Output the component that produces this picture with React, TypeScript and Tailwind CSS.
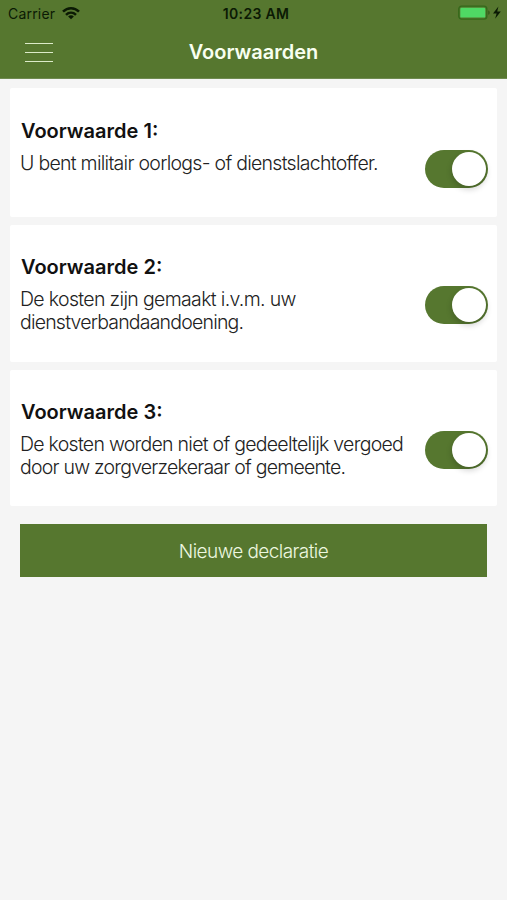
import React, { useState } from "react";

interface Voorwaarde {
  id: number;
  regels: { tekst: string; className: string }[];
  cardClass: string;
  textClass: string;
  toggleClass: string;
}

const voorwaarden: Voorwaarde[] = [
  {
    id: 1,
    regels: [
      { tekst: "U bent militair oorlogs- of dienstslachtoffer.", className: "tracking-[-0.72px]" },
    ],
    cardClass: "h-[129px]",
    textClass: "pt-[29px]",
    toggleClass: "pt-[62px]",
  },
  {
    id: 2,
    regels: [
      { tekst: "De kosten zijn gemaakt i.v.m. uw", className: "tracking-[-0.66px]" },
      { tekst: "dienstverbandaandoening.", className: "tracking-[-0.8px]" },
    ],
    cardClass: "h-[137px]",
    textClass: "pt-[28px]",
    toggleClass: "pt-[61px]",
  },
  {
    id: 3,
    regels: [
      { tekst: "De kosten worden niet of gedeeltelijk vergoed", className: "tracking-[-0.73px]" },
      { tekst: "door uw zorgverzekeraar of gemeente.", className: "tracking-[-0.78px]" },
    ],
    cardClass: "h-[136px]",
    textClass: "pt-[28px]",
    toggleClass: "pt-[61px]",
  },
];

const WifiIcon = () => (
  <svg width="18" height="13" viewBox="0 0 18 13" fill="none" stroke="#0b1a04" strokeWidth="2.5">
    <path d="M1 4.7C5.6 0.1 12.4 0.1 17 4.7" />
    <path d="M4 7.8C6.9 5 11.1 5 14 7.8" />
    <path d="M9 12.2L6.1 9.4C7.8 8 10.2 8 11.9 9.4Z" fill="#0b1a04" stroke="none" />
  </svg>
);

const BatteryIcon = () => (
  <svg width="45" height="16" viewBox="0 0 45 16">
    <rect x="0.8" y="1.1" width="28" height="13" rx="2.8" fill="none" stroke="#34691a" strokeWidth="1.4" />
    <rect x="2.3" y="2.8" width="25" height="9.8" rx="1.2" fill="#4fd964" />
    <path d="M30.2 5.5C32.3 6 32.3 9.2 30.2 9.7Z" fill="#34591a" />
    <path d="M40.4 1.6L35 8.4H38.6L37.1 13.7L42.8 6.4H39.2Z" fill="#0b1a04" />
  </svg>
);

const Toggle = ({ checked, onChange }: { checked: boolean; onChange: () => void }) => (
  <button
    role="switch"
    aria-checked={checked}
    onClick={onChange}
    className={`flex h-[38px] w-[63px] shrink-0 items-center rounded-full px-[2px] ${
      checked ? "justify-end bg-[#56772f]" : "justify-start bg-gray-300"
    }`}
  >
    <span className="size-[34px] rounded-full bg-white shadow-[0_3px_6px_rgba(0,0,0,0.2)]" />
  </button>
);

const App = () => {
  const [akkoord, setAkkoord] = useState<Record<number, boolean>>({ 1: true, 2: true, 3: true });

  return (
    <div className="h-[900px] w-[507px] overflow-hidden bg-[#f5f5f5] font-['Inter',sans-serif]">
      <header className="h-[79px] border-b border-[#6f8a50] bg-[#56772f]">
        <div className="grid h-[26px] grid-cols-3 items-center text-[14px] text-[#0b1a04]">
          <div className="flex items-center gap-[7px] pl-2">
            <span className="tracking-[0.2px]">Carrier</span>
            <WifiIcon />
          </div>
          <span className="pl-[5px] text-center font-semibold tracking-[0.3px] whitespace-nowrap">10:23 AM</span>
          <div className="flex justify-end pr-[4px]">
            <BatteryIcon />
          </div>
        </div>
        <div className="grid h-[52px] grid-cols-[1fr_auto_1fr] items-center">
          <button aria-label="Menu" className="flex w-[53px] flex-col gap-[8px] pl-[25px]">
            <span className="h-px w-[28px] bg-[#dcebc9]" />
            <span className="h-px w-[28px] bg-[#dcebc9]" />
            <span className="h-px w-[28px] bg-[#dcebc9]" />
          </button>
          <h1 className="text-[20px] font-semibold text-[#f8fff0]">Voorwaarden</h1>
        </div>
      </header>

      <main className="flex flex-col px-[10px] pt-[9px]">
        <div className="flex flex-col gap-2">
          {voorwaarden.map((v) => (
            <section
              key={v.id}
              className={`flex items-start justify-between rounded-[2px] bg-white pr-[9px] pl-[10px] ${v.cardClass}`}
            >
              <div className={v.textClass}>
                <h2 className="pl-px text-[20px] leading-7 font-semibold text-[#111]">
                  Voorwaarde {v.id}:
                </h2>
                <p className="pt-[7px] text-[19.5px] leading-[23px] font-light text-[#222]">
                  {v.regels.map((regel) => (
                    <span key={regel.tekst} className={`block whitespace-nowrap ${regel.className}`}>
                      {regel.tekst}
                    </span>
                  ))}
                </p>
              </div>
              <div className={v.toggleClass}>
                <Toggle
                  checked={akkoord[v.id]}
                  onChange={() => setAkkoord({ ...akkoord, [v.id]: !akkoord[v.id] })}
                />
              </div>
            </section>
          ))}
        </div>

        <button className="mx-[10px] mt-[18px] h-[53px] bg-[#56772f] pt-[3px] text-[19px] font-light tracking-[-0.56px] text-[#edf7e0]">
          Nieuwe declaratie
        </button>
      </main>
    </div>
  );
};

export default App;
